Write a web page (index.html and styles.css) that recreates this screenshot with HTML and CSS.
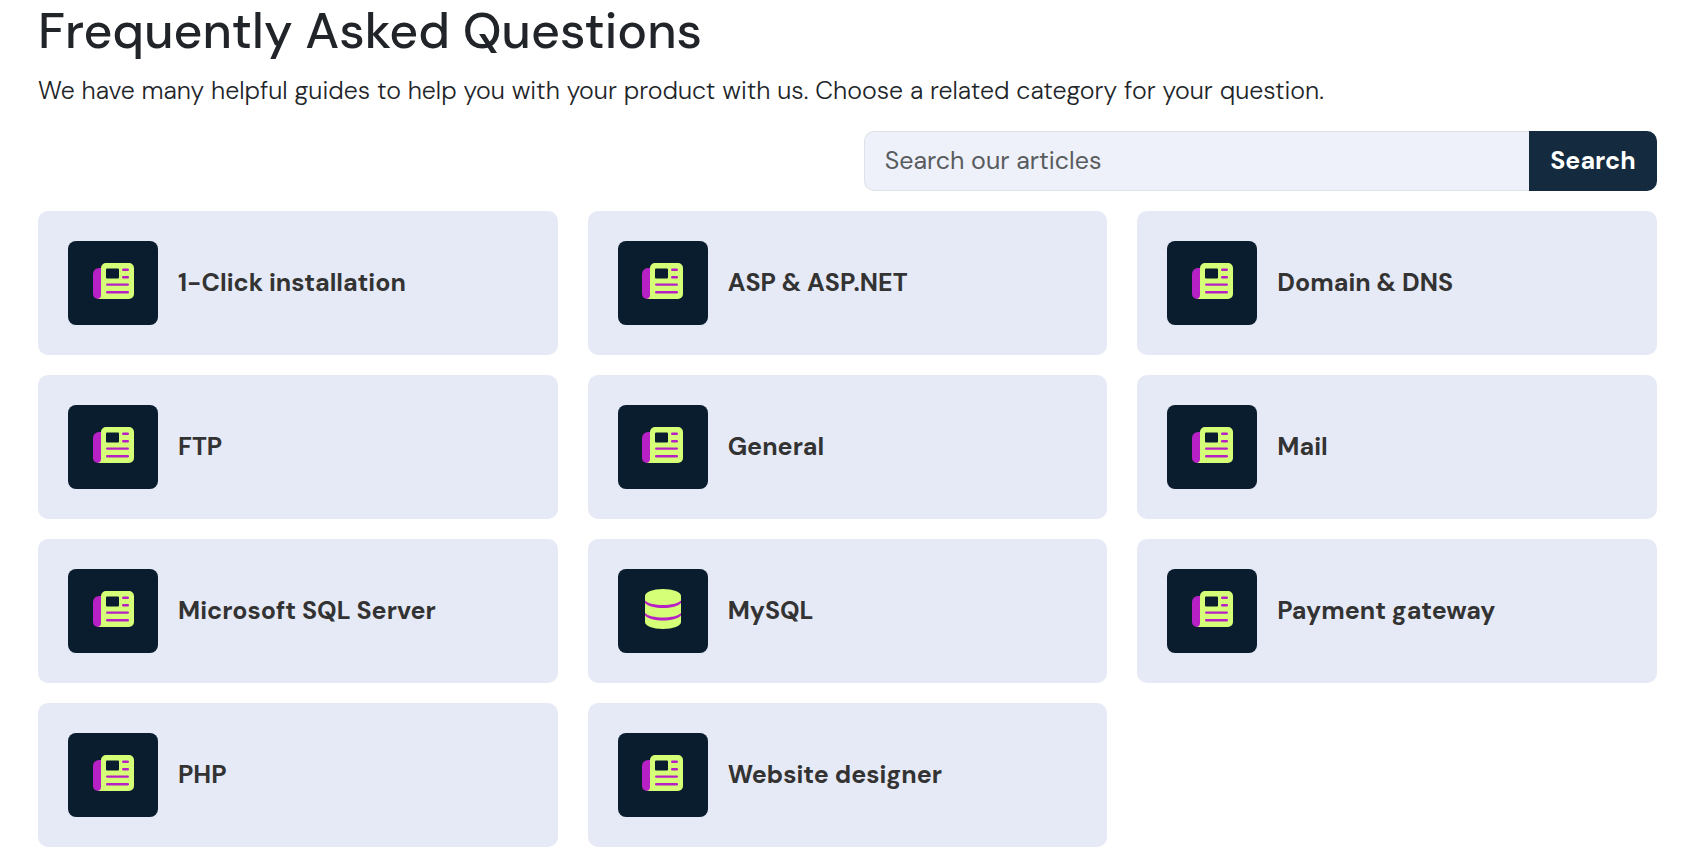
FILE: index.html
```html
<!DOCTYPE html>
<html lang="en">
<head>
<meta charset="utf-8">
<meta name="viewport" content="width=device-width, initial-scale=1">
<title>Frequently Asked Questions</title>
<link rel="stylesheet" href="styles.css">
</head>
<body>
<svg class="sprite" aria-hidden="true">
  <symbol id="news" viewBox="0 0 41 36">
    <path class="accent" d="M8 5H6a6 6 0 0 0-6 6v20a5 5 0 0 0 5 5h3z"/>
    <path class="lime" d="M13 0h23a5 5 0 0 1 5 5v26a5 5 0 0 1-5 5H4a4 4 0 0 0 4-4V5a5 5 0 0 1 5-5z"/>
    <rect class="dark" x="13" y="5.500" width="13" height="10" rx="1"/>
    <rect class="accent" x="29" y="5.500" width="7" height="2.400" rx="1.200"/>
    <rect class="accent" x="29" y="13" width="7" height="2.400" rx="1.200"/>
    <rect class="accent" x="13" y="20.400" width="23" height="2.400" rx="1.200"/>
    <rect class="accent" x="13" y="28" width="23" height="2.400" rx="1.200"/>
  </symbol>
  <symbol id="database" viewBox="0 0 36 40">
    <path class="lime" d="M0 7C0 3 8 0 18 0s18 3 18 7v26c0 4-8 7-18 7S0 37 0 33z"/>
    <path class="accent" d="M0 11.500c3 3 10 4.500 18 4.500s15-1.500 18-4.500V14c-3 3.300-10 5-18 5S3 17.300 0 14z"/>
    <path class="accent" d="M0 24c3 3 10 4.500 18 4.500S33 27 36 24v2.500c-3 3.300-10 5-18 5s-15-1.700-18-5z"/>
  </symbol>
</svg>
<main class="faq">
  <h1 class="faq-title">Frequently Asked Questions</h1>
  <p class="faq-intro">We have many helpful guides to help you with your product with us. Choose a related category for your question.</p>
  <form class="search" role="search">
    <input class="search-input" type="search" placeholder="Search our articles" aria-label="Search our articles">
    <button class="search-button" type="submit">Search</button>
  </form>
  <nav class="categories" aria-label="Categories">
    <a class="card" href="#"><span class="tile"><svg class="icon"><use href="#news"/></svg></span><span class="name">1-Click installation</span></a>
    <a class="card" href="#"><span class="tile"><svg class="icon"><use href="#news"/></svg></span><span class="name">ASP &amp; ASP.NET</span></a>
    <a class="card" href="#"><span class="tile"><svg class="icon"><use href="#news"/></svg></span><span class="name">Domain &amp; DNS</span></a>
    <a class="card" href="#"><span class="tile"><svg class="icon"><use href="#news"/></svg></span><span class="name">FTP</span></a>
    <a class="card" href="#"><span class="tile"><svg class="icon"><use href="#news"/></svg></span><span class="name">General</span></a>
    <a class="card" href="#"><span class="tile"><svg class="icon"><use href="#news"/></svg></span><span class="name">Mail</span></a>
    <a class="card" href="#"><span class="tile"><svg class="icon"><use href="#news"/></svg></span><span class="name">Microsoft SQL Server</span></a>
    <a class="card" href="#"><span class="tile"><svg class="icon icon-database"><use href="#database"/></svg></span><span class="name">MySQL</span></a>
    <a class="card" href="#"><span class="tile"><svg class="icon"><use href="#news"/></svg></span><span class="name">Payment gateway</span></a>
    <a class="card" href="#"><span class="tile"><svg class="icon"><use href="#news"/></svg></span><span class="name">PHP</span></a>
    <a class="card" href="#"><span class="tile"><svg class="icon"><use href="#news"/></svg></span><span class="name">Website designer</span></a>
  </nav>
</main>
</body>
</html>
```
FILE: styles.css
```css
* { box-sizing: border-box; }
body {
  margin: 0;
  background: #fff;
  color: #212529;
  font-family: "DM Sans", "Open Sans", sans-serif;
  font-size: 25px;
}
.sprite { position: absolute; width: 0; height: 0; }
.lime { fill: #d5ff77; }
.accent { fill: #b620c4; }
.dark { fill: #0a1d2e; }
.faq { padding: 0 49px 8px 38px; }
.faq-title {
  margin: 0;
  font-size: 50px;
  font-weight: 500;
  line-height: 62px;
}
.faq-intro {
  margin: 10px 0 21px;
  font-weight: 300;
  line-height: 38px;
}
.search {
  display: flex;
  width: 49%;
  height: 60px;
  margin: 0 0 20px auto;
}
.search-input {
  flex: 1;
  min-width: 0;
  padding: 0 20px 2px;
  border: 1px solid #dee2e6;
  border-right: 0;
  border-radius: 10px 0 0 10px;
  background: #eef1f9;
  color: #212529;
  font: inherit;
}
.search-input::placeholder { color: #595c5f; opacity: 1; }
.search-button {
  width: 128px;
  padding: 0 0 2px;
  border: 0;
  border-radius: 0 10px 10px 0;
  background: #142b3f;
  color: #fff;
  font: inherit;
  font-weight: 700;
}
.categories {
  display: grid;
  grid-template-columns: repeat(3, 1fr);
  gap: 20px 30px;
}
.card {
  display: flex;
  align-items: center;
  gap: 20px;
  padding: 30px;
  border-radius: 10px;
  background: #e6eaf6;
  color: #333;
  font-weight: 700;
  text-decoration: none;
}
.name { padding-bottom: 2px; }
.tile {
  display: flex;
  flex: none;
  align-items: center;
  justify-content: center;
  width: 90px;
  height: 84px;
  padding-bottom: 4px;
  border-radius: 8px;
  background: #0a1d2e;
}
.icon { width: 41px; height: 36px; }
.icon-database { width: 36px; height: 40px; }
```
